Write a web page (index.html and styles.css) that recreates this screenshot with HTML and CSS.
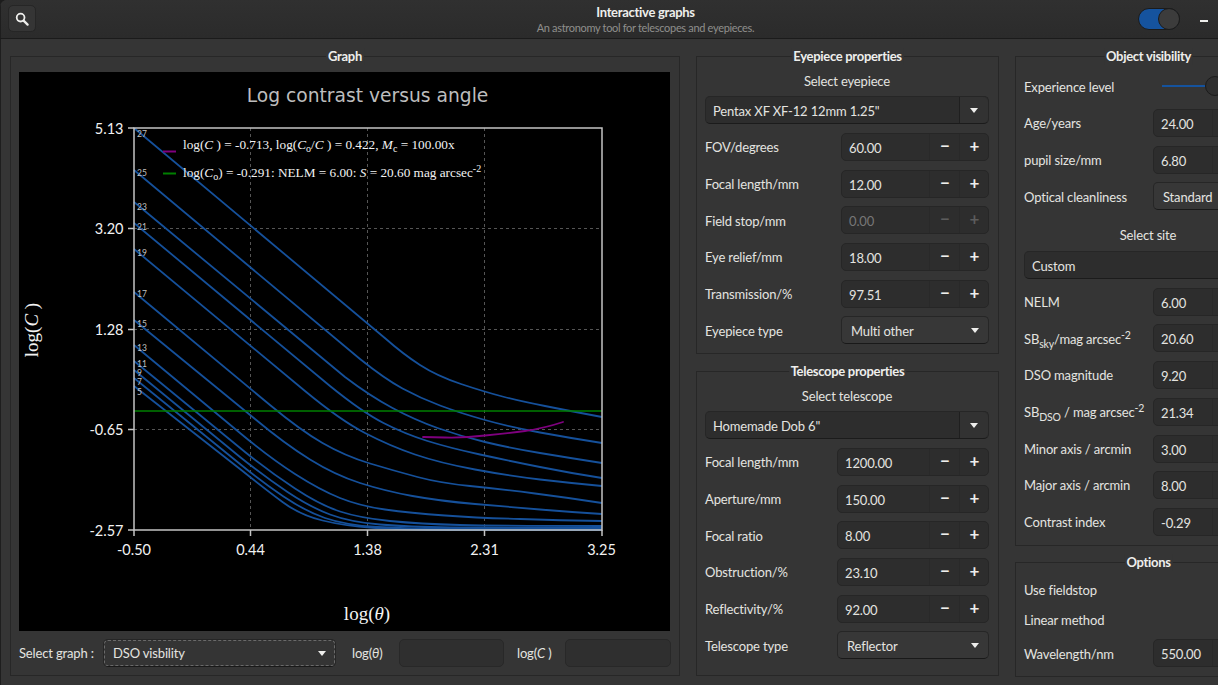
FILE: index.html
```html
<!DOCTYPE html>
<html lang="en">
<head>
<meta charset="utf-8">
<title>Interactive graphs</title>
<link rel="stylesheet" href="styles.css">
</head>
<body>
<div class="window">
  <header class="titlebar">
    <div class="tb-left">
      <button class="search-btn" aria-label="Search">
        <svg width="14" height="14" viewBox="0 0 14 14"><circle cx="5.6" cy="5.6" r="3.9" fill="none" stroke="#eeeeec" stroke-width="1.8"/><path d="M8.6 8.6 12.6 12.6" stroke="#eeeeec" stroke-width="2.2" stroke-linecap="round"/></svg>
      </button>
    </div>
    <div class="tb-title">
      <div class="tb-name">Interactive graphs</div>
      <div class="tb-sub">An astronomy tool for telescopes and eyepieces.</div>
    </div>
    <div class="tb-right">
      <div class="toggle"><span class="toggle-thumb"></span></div>
      <div class="wm"><span class="wm-min"></span></div>
      <div class="wm"></div>
      <div class="wm"></div>
    </div>
  </header>

  <main class="content">
    <section class="frame graph-frame">
      <h2 class="frame-title">Graph</h2>
      <svg class="plot" width="651" height="559" viewBox="19 72 651 559">
        <text class="p-title" x="367.5" y="102" text-anchor="middle">Log contrast versus angle</text>

        <g class="grid">
          <path d="M250.5 128V530M367.5 128V530M484.5 128V530M134 228.5H602M134 329.5H602M134 429.5H602"/>
        </g>

        <g class="curves">
          <path d="M134 128L386 339Q403 354 420 365Q437 376 461 384Q485 392 502.5 396.5Q520 401 545 406Q570 411 602 417"/>
          <path d="M134 170L360 359Q385 379 402.5 388.5Q420 398 440 405.5Q460 413 485 420Q510 427 540 432.5Q570 438 602 443"/>
          <path d="M134 202L345 377Q370 396 392.5 408Q415 420 437.5 428Q460 436 485 442Q510 448 540 453Q570 458 602 463"/>
          <path d="M134 223L330 386Q362 412 383.5 423Q405 434 427.5 441Q450 448 480 454.5Q510 461 540 467Q570 473 602 478"/>
          <path d="M134 249L305 391Q340 420 365 433Q390 446 415 454.5Q440 463 475 469.5Q510 476 540 479.5Q570 483 602 486"/>
          <path d="M134 292L270 405Q300 430 322.5 443Q345 456 370 463.5Q395 471 417.5 477Q440 483 470 486Q500 489 535 493.5Q570 498 602 503"/>
          <path d="M134 320L255 419Q285 444 310 459.5Q335 475 360 483Q385 491 412.5 496Q440 501 475 504Q510 507 540 509.5Q570 512 602 514"/>
          <path d="M134 345L240 433Q270 458 295 474Q320 490 340 498Q360 506 385 509.5Q410 513 445 515.5Q480 518 520 519Q560 520.5 602 521"/>
          <path d="M134 361L245 452Q270 472 295 488.5Q320 505 340 511.5Q360 518 390 521Q420 524 460 525Q500 526 602 526"/>
          <path d="M134 370L240 457Q265 477 287.5 492Q310 507 330 514.5Q350 522 380 524.5Q410 527 450 527.5L602 528"/>
          <path d="M134 378L240 464Q262 482 283.5 496.5Q305 511 325 518Q345 525 377.5 527Q410 529 450 529L602 529"/>
          <path d="M134 386L240 469Q265 489 282.5 502Q300 515 322.5 520.5Q345 526 372.5 527.75Q400 529.5 450 530L602 530"/>
        </g>

        <path class="line-green" d="M134 411H602"/>
        <path class="line-purple" d="M423 437L445 437.5Q465 438 485 435.5Q510 433 525 431Q545 428 563 422"/>

        <g class="frame-lines">
          <path d="M134 128H602V530H134Z"/>
          <path d="M128 128H134M128 228.5H134M128 329.5H134M128 429.5H134M128 530H134M134 530V536M250.5 530V536M367.5 530V536M484.5 530V536M602 530V536"/>
        </g>

        <g class="curve-labels">
          <text x="137" y="137">27</text>
          <text x="137" y="176">25</text>
          <text x="137" y="210">23</text>
          <text x="137" y="230">21</text>
          <text x="137" y="256">19</text>
          <text x="137" y="297">17</text>
          <text x="137" y="327">15</text>
          <text x="137" y="351">13</text>
          <text x="137" y="367">11</text>
          <text x="137" y="376">9</text>
          <text x="137" y="385">7</text>
          <text x="137" y="395">5</text>
        </g>

        <g class="ticks">
          <text x="123.5" y="134" text-anchor="end">5.13</text>
          <text x="123.5" y="234" text-anchor="end">3.20</text>
          <text x="123.5" y="335" text-anchor="end">1.28</text>
          <text x="123.5" y="435" text-anchor="end">-0.65</text>
          <text x="123.5" y="536" text-anchor="end">-2.57</text>
          <text x="134" y="555" text-anchor="middle">-0.50</text>
          <text x="250.5" y="555" text-anchor="middle">0.44</text>
          <text x="367.5" y="555" text-anchor="middle">1.38</text>
          <text x="484.5" y="555" text-anchor="middle">2.31</text>
          <text x="601.5" y="555" text-anchor="middle">3.25</text>
        </g>

        <path class="leg-purple" d="M163 151.5H176"/>
        <path class="leg-green" d="M163 173.5H176"/>
        <text class="legend" x="183" y="149">log(<tspan class="it">C</tspan> ) = -0.713, log(<tspan class="it">C</tspan><tspan class="sub" dy="3">o</tspan><tspan dy="-3">/</tspan><tspan class="it">C</tspan> ) = 0.422, <tspan class="it">M</tspan><tspan class="sub" dy="3">c</tspan><tspan dy="-3"> = 100.00x</tspan></text>
        <text class="legend" x="183" y="177">log(<tspan class="it">C</tspan><tspan class="sub" dy="3">o</tspan><tspan dy="-3">) = -0.291: NELM = 6.00: </tspan><tspan class="it">S</tspan> = 20.60 mag arcsec<tspan class="sub" dy="-5">-2</tspan></text>

        <text class="axis-label" transform="translate(38 330) rotate(-90)" text-anchor="middle">log(<tspan class="it">C</tspan> )</text>
        <text class="axis-label" x="367" y="620" text-anchor="middle">log(<tspan class="it">θ</tspan>)</text>
      </svg>
      <div class="graph-controls">
        <label class="gc-select">Select graph :</label>
        <div class="btn-combo focus-combo"><span>DSO visbility</span><i class="arrow"></i></div>
        <label class="gc-theta">log(<em>θ</em>)</label>
        <div class="readout r1"></div>
        <label class="gc-c">log(<em>C</em> )</label>
        <div class="readout r2"></div>
      </div>
    </section>

    <div class="stack stack-mid">
      <section class="frame eyepiece-frame">
        <h2 class="frame-title">Eyepiece properties</h2>
        <div class="sel-label">Select eyepiece</div>
        <div class="row"><div class="entry-combo"><span>Pentax XF XF-12 12mm 1.25"</span><b><i class="arrow"></i></b></div></div>
        <div class="row"><label>FOV/degrees</label><div class="spin spin-e"><span class="val">60.00</span><b>−</b><b>+</b></div></div>
        <div class="row"><label>Focal length/mm</label><div class="spin spin-e"><span class="val">12.00</span><b>−</b><b>+</b></div></div>
        <div class="row"><label>Field stop/mm</label><div class="spin spin-e disabled"><span class="val">0.00</span><b>−</b><b>+</b></div></div>
        <div class="row"><label>Eye relief/mm</label><div class="spin spin-e"><span class="val">18.00</span><b>−</b><b>+</b></div></div>
        <div class="row"><label>Transmission/%</label><div class="spin spin-e"><span class="val">97.51</span><b>−</b><b>+</b></div></div>
        <div class="row"><label>Eyepiece type</label><div class="btn-combo spin-e"><span>Multi other</span><i class="arrow"></i></div></div>
      </section>

      <section class="frame telescope-frame">
        <h2 class="frame-title">Telescope properties</h2>
        <div class="sel-label">Select telescope</div>
        <div class="row"><div class="entry-combo"><span>Homemade Dob 6"</span><b><i class="arrow"></i></b></div></div>
        <div class="row"><label>Focal length/mm</label><div class="spin spin-t"><span class="val">1200.00</span><b>−</b><b>+</b></div></div>
        <div class="row"><label>Aperture/mm</label><div class="spin spin-t"><span class="val">150.00</span><b>−</b><b>+</b></div></div>
        <div class="row"><label>Focal ratio</label><div class="spin spin-t"><span class="val">8.00</span><b>−</b><b>+</b></div></div>
        <div class="row"><label>Obstruction/%</label><div class="spin spin-t"><span class="val">23.10</span><b>−</b><b>+</b></div></div>
        <div class="row"><label>Reflectivity/%</label><div class="spin spin-t"><span class="val">92.00</span><b>−</b><b>+</b></div></div>
        <div class="row"><label>Telescope type</label><div class="btn-combo spin-t"><span>Reflector</span><i class="arrow"></i></div></div>
      </section>
    </div>

    <div class="stack">
      <section class="frame object-frame">
        <h2 class="frame-title">Object visibility</h2>
        <div class="row"><label>Experience level</label><div class="slider"><span class="slider-fill"></span><span class="slider-thumb"></span></div></div>
        <div class="row"><label>Age/years</label><div class="spin spin-o"><span class="val">24.00</span><b>−</b><b>+</b></div></div>
        <div class="row"><label>pupil size/mm</label><div class="spin spin-o"><span class="val">6.80</span><b>−</b><b>+</b></div></div>
        <div class="row"><label>Optical cleanliness</label><div class="btn-combo spin-o std"><span>Standard</span><i class="arrow"></i></div></div>
        <div class="sel-label site-label">Select site</div>
        <div class="row"><div class="entry-combo"><span>Custom</span><b><i class="arrow"></i></b></div></div>
        <div class="row"><label>NELM</label><div class="spin spin-o"><span class="val">6.00</span><b>−</b><b>+</b></div></div>
        <div class="row"><label>SB<sub>sky</sub>/mag arcsec<sup>-2</sup></label><div class="spin spin-o"><span class="val">20.60</span><b>−</b><b>+</b></div></div>
        <div class="row"><label>DSO magnitude</label><div class="spin spin-o"><span class="val">9.20</span><b>−</b><b>+</b></div></div>
        <div class="row"><label>SB<sub>DSO</sub> / mag arcsec<sup>-2</sup></label><div class="spin spin-o"><span class="val">21.34</span><b>−</b><b>+</b></div></div>
        <div class="row"><label>Minor axis / arcmin</label><div class="spin spin-o"><span class="val">3.00</span><b>−</b><b>+</b></div></div>
        <div class="row"><label>Major axis / arcmin</label><div class="spin spin-o"><span class="val">8.00</span><b>−</b><b>+</b></div></div>
        <div class="row"><label>Contrast index</label><div class="spin spin-o"><span class="val">-0.29</span><b>−</b><b>+</b></div></div>
      </section>

      <section class="frame options-frame">
        <h2 class="frame-title">Options</h2>
        <div class="row row-opt"><label>Use fieldstop</label></div>
        <div class="row row-opt"><label>Linear method</label></div>
        <div class="row"><label>Wavelength/nm</label><div class="spin spin-o"><span class="val">550.00</span><b>−</b><b>+</b></div></div>
      </section>
    </div>
  </main>
</div>
</body>
</html>
```

FILE: styles.css
```css
* { box-sizing: border-box; }
html, body { margin: 0; padding: 0; width: 1218px; height: 685px; overflow: hidden; background: #1c1c1c; }
body { font: 13px/1.2 Lato, "Noto Sans", sans-serif; letter-spacing: -0.15px; color: #e4e4e0; }

.window { width: 1291px; height: 685px; background: #353535; border-radius: 7px 7px 0 0; box-shadow: inset 1px 0 0 #1e1e1e; overflow: hidden; }

/* title bar */
.titlebar { height: 39px; display: grid; grid-template-columns: 1fr auto 1fr; align-items: center; background: linear-gradient(#303030, #2b2b2b); border-bottom: 1px solid #1b1b1b; box-shadow: inset 1px 0 0 #1e1e1e; }
.tb-left { padding-left: 8px; display: flex; }
.search-btn { width: 28px; height: 27px; margin-top: -1px; padding: 0; display: flex; align-items: center; justify-content: center; background: #353535; border: 1px solid #262626; border-radius: 5px; }
.tb-title { text-align: center; padding-top: 2px; }
.tb-name { font-weight: 700; font-size: 13px; line-height: 15px; letter-spacing: -0.3px; color: #eeeeec; }
.tb-sub { font-size: 11px; line-height: 15px; letter-spacing: -0.32px; color: #8f8f8c; }
.tb-right { display: flex; justify-content: flex-end; align-items: center; padding-right: 6px; }
.toggle { width: 42px; height: 22px; margin-right: 9px; border-radius: 11px; background: #15539e; border: 1px solid #1b1b1b; position: relative; }
.toggle-thumb { position: absolute; right: -1px; top: -1px; width: 22px; height: 22px; border-radius: 50%; background: #3c3c3c; border: 1px solid #1b1b1b; }
.wm { width: 30px; height: 24px; margin-right: 2px; display: flex; align-items: center; justify-content: center; }
.wm-min { width: 8px; height: 2px; margin-top: 4px; background: #eeeeec; }

/* layout */
.content { display: grid; grid-template-columns: 670px 303px 267px; gap: 16px; height: 646px; padding: 17px 9px 9px 10px; }
.stack { display: flex; flex-direction: column; gap: 16px; min-height: 0; }
.stack-mid { gap: 17px; }

.frame { position: relative; border: 1px solid #272727; padding: 12px 9px 4px 8px; }
.frame-title { position: absolute; top: -9px; left: 50%; transform: translateX(-50%); margin: 0; padding: 0 2px; background: #353535; font-size: 13px; line-height: 17px; font-weight: 700; letter-spacing: -0.3px; color: #eeeeec; white-space: nowrap; }

.graph-frame { padding: 15px 8px 8px; display: flex; flex-direction: column; }
.plot { display: block; background: #000; flex: none; }
.eyepiece-frame { flex: none; height: 298px; }
.telescope-frame { flex: 1; }
.object-frame { flex: none; height: 490px; padding-top: 11px; }
.options-frame { flex: 1; }

.sel-label { height: 23px; text-align: center; line-height: 25px; }
.site-label { height: 32px; padding-top: 8px; }
.row { height: 36.7px; display: flex; align-items: center; justify-content: space-between; }
.row-opt { height: 30px; }
.row label, .graph-controls label { white-space: nowrap; padding-top: 2px; }
sub, sup { font-size: 10.5px; line-height: 0; }

/* spin buttons */
.spin { height: 28px; display: flex; background: #2d2d2d; border: 1px solid #262626; border-radius: 5px; align-items: stretch; }
.spin-e { width: 148px; }
.spin-t { width: 152px; }
.spin-o { width: 119px; flex: none; }
.spin .val { flex: 1; padding-left: 7px; line-height: 28px; }
.spin b { width: 29.5px; padding-left: 1px; flex: none; text-align: center; font-weight: 700; font-size: 17px; line-height: 24px; color: #eeeeec; border-left: 1px solid #292929; }
.spin.disabled .val { color: #777; }
.spin.disabled b { color: #5c5c5c; }

/* combos */
.entry-combo { width: 100%; height: 28px; display: flex; background: #2d2d2d; border: 1px solid #262626; border-bottom-color: #1b1b1b; border-radius: 5px; }
.entry-combo span { flex: 1; padding-left: 7px; line-height: 28px; }
.entry-combo b { width: 29px; display: flex; align-items: center; justify-content: center; border-left: 1px solid #1f1f1f; background: #323232; border-radius: 0 5px 5px 0; }
.btn-combo { height: 28px; display: flex; align-items: center; justify-content: space-between; padding: 0 9px; background: #373737; border: 1px solid #262626; border-bottom-color: #191919; border-radius: 5px; }
.btn-combo span { padding-top: 2px; }
.arrow { display: block; width: 0; height: 0; border-left: 4.5px solid transparent; border-right: 4.5px solid transparent; border-top: 5px solid #eeeeec; }

/* slider */
.slider { position: relative; width: 119px; height: 22px; flex: none; }
.slider-fill { position: absolute; left: 9px; top: 10px; width: 44px; height: 2px; background: #15539e; }
.slider-thumb { position: absolute; left: 52px; top: 1px; width: 20px; height: 20px; border-radius: 50%; background: #2f2f2f; border: 1px solid #1b1b1b; }

/* bottom controls */
.graph-controls { display: flex; align-items: center; margin-top: 8px; height: 28px; }
.gc-select { width: 84px; }
.focus-combo { width: 233px; outline: 1px dashed #6a6a6a; outline-offset: -2px; background: #343434; }
.gc-theta { width: 47px; margin-left: 16px; }
.gc-c { width: 48px; margin-left: 13px; }
.graph-controls em { font-style: italic; }
.readout { height: 28px; background: #2f2f2f; border: 1px solid #282828; border-radius: 5px; }
.r1 { width: 105px; }
.r2 { flex: 1; }

/* plot */
.plot text { letter-spacing: 0; }
.p-title { font: 18.7px "DejaVu Sans", sans-serif; fill: #bdbdbd; }
.grid path { fill: none; stroke: #555; stroke-width: 1; stroke-dasharray: 3 3; }
.curves path { fill: none; stroke: #15509a; stroke-width: 1.8; stroke-linejoin: round; }
.line-green { stroke: #007f00; stroke-width: 1.6; fill: none; }
.line-purple { fill: none; stroke: #7f007f; stroke-width: 1.8; stroke-linejoin: round; stroke-linecap: round; }
.frame-lines path { fill: none; stroke: #c4c4c4; stroke-width: 1.5; }
.curve-labels text { font: 8.5px Lato, sans-serif; fill: #c0c0c0; }
.ticks text { font: 14.5px Lato, sans-serif; fill: #f2f2f2; }
.leg-purple { stroke: #7f007f; stroke-width: 2; }
.leg-green { stroke: #007f00; stroke-width: 2; }
.legend { font: 13.25px "Liberation Serif", serif; fill: #f2f2f2; }
.legend .it, .axis-label .it { font-style: italic; }
.legend .sub { font-size: 10px; }
.axis-label { font: 19px "Liberation Serif", serif; fill: #f2f2f2; }
```
